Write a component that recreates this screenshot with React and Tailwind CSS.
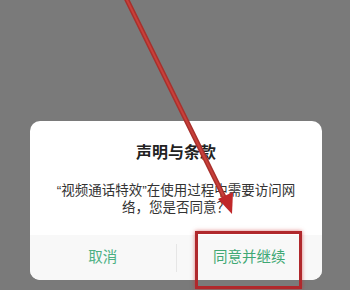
import React from 'react'

const font = { fontFamily: '"Liberation Sans", "Noto Sans CJK SC", sans-serif' }

const App = () => {
  return (
    <div className="relative w-[350px] h-[290px] bg-[#7a7a7a] overflow-hidden" style={font}>
      <div className="ml-[30px] pt-[121px]">
        <div className="w-[292px] h-[159px] bg-white rounded-[10px] overflow-hidden flex flex-col">
          <div className="pt-[21px] text-center text-[16px] leading-[22px] font-bold text-[#222]">声明与条款</div>
          <div className="mt-[18px] px-4 text-center text-[13.5px] leading-[17px] text-[#333]">
            “视频通话特效”在使用过程中需要访问网
            <br />
            络，您是否同意？
          </div>
          <div className="mt-auto h-[45px] bg-[#f8f8f8] flex items-center">
            <div className="flex-1 text-center text-[14.5px] text-[#4bb083]">取消</div>
            <div className="w-px h-[28px] bg-[#e6e6e6]"></div>
            <div className="flex-1 text-center text-[14.5px] text-[#3fa874]">同意并继续</div>
          </div>
        </div>
      </div>

      <div className="absolute left-[195px] top-[231px] w-[107px] h-[58px] border-[3px] border-[#b0282c] shadow-[0_0_4px_rgba(200,40,40,0.6)]"></div>

      <svg className="absolute inset-0" width="350" height="290" viewBox="0 0 350 290">
        <line x1="126" y1="-2" x2="226" y2="201" stroke="#a8302c" strokeWidth="5" strokeLinecap="round" />
        <line x1="126" y1="-2" x2="226" y2="201" stroke="#c8403a" strokeWidth="2" strokeLinecap="round" />
        <polygon points="232,214 218,199 233,192" fill="#c0282a" />
      </svg>
    </div>
  )
}

export default App
